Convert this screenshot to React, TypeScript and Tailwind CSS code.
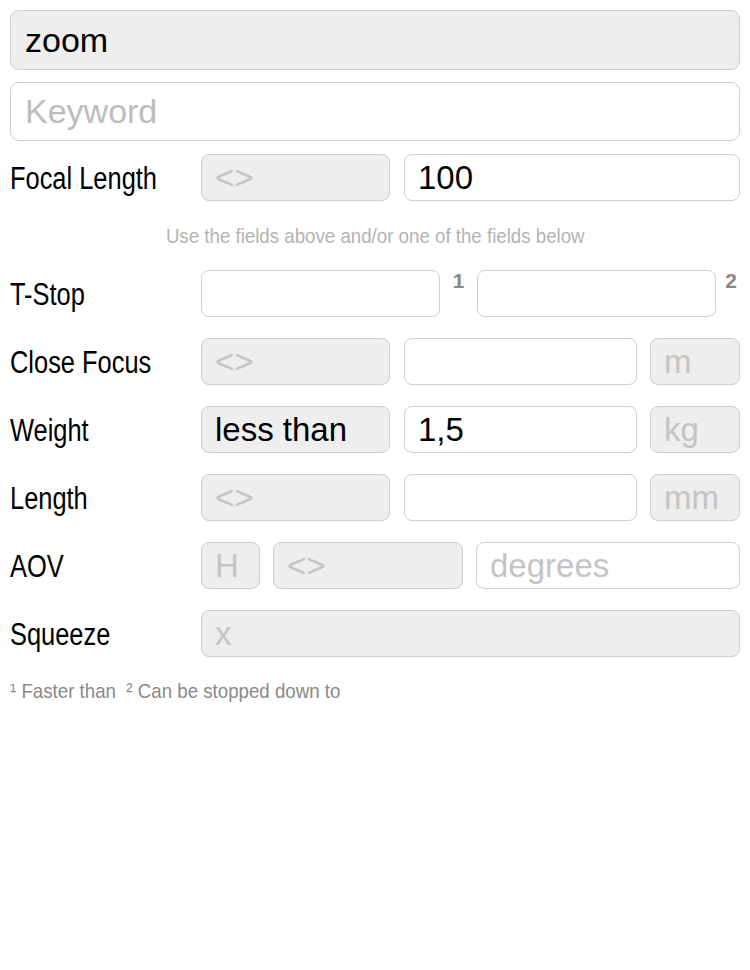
import React from 'react';

// condensed look: Liberation Sans squeezed horizontally (no condensed face installed)
const narrow = "font-['Liberation_Sans',Arial,sans-serif] inline-block scale-x-[0.82] whitespace-nowrap";
const narrowSmall = "font-['Liberation_Sans',Arial,sans-serif] inline-block scale-x-[0.89] whitespace-nowrap";
const field = "font-['Liberation_Sans',Arial,sans-serif]";

type BoxProps = {
  text?: string;
  muted?: boolean;
  gray?: boolean;
  className?: string;
};

const Box: React.FC<BoxProps> = ({ text = '', muted, gray, className = '' }) => (
  <div
    className={`h-[47px] rounded-[8px] border border-[#cfcfcf] flex items-center pl-[13px] text-[33px] leading-none whitespace-nowrap overflow-hidden ${field} ${
      gray ? 'bg-[#eeeeee]' : 'bg-white'
    } ${muted ? 'text-[#c4c4c4]' : 'text-black'} ${className}`}
  >
    {text}
  </div>
);

const Row: React.FC<{ title: string; children: React.ReactNode }> = ({ title, children }) => (
  <div className="h-[47px] flex items-center">
    <div className="w-[191px] shrink-0 text-[31px] text-black leading-none">
      <span className={`${narrow} origin-left`}>{title}</span>
    </div>
    <div className="flex-1 flex items-center">{children}</div>
  </div>
);

export default function App() {
  return (
    <div className="min-h-screen bg-white px-[10px] pt-[10px]">
      <div
        className={`h-[60px] rounded-[9px] border border-[#cfcfcf] bg-[#eeeeee] flex items-center pl-[14px] text-[34px] text-black ${field}`}
      >
        zoom
      </div>
      <div
        className={`mt-[12px] h-[59px] rounded-[9px] border border-[#cfcfcf] bg-white flex items-center pl-[14px] text-[34px] text-[#bdbdbd] ${field}`}
      >
        Keyword
      </div>

      <div className="mt-[13px]">
        <Row title="Focal Length">
          <Box gray muted text="<>" className="w-[189px]" />
          <Box text="100" className="ml-[14px] flex-1" />
        </Row>

        <div className="h-[69px] flex items-center justify-center text-[21px] text-[#b3b3b3] leading-none">
          <span className={`${narrowSmall} origin-center`}>Use the fields above and/or one of the fields below</span>
        </div>

        <div className="flex flex-col gap-[21px]">
          <Row title="T-Stop">
            <Box className="w-[239px]" />
            <div className={`w-[37px] self-start text-center text-[21px] font-bold text-[#888888] leading-none ${field}`}>1</div>
            <Box className="w-[239px]" />
            <div className={`flex-1 self-start text-right pr-[3px] text-[21px] font-bold text-[#888888] leading-none ${field}`}>2</div>
          </Row>
          <Row title="Close Focus">
            <Box gray muted text="<>" className="w-[189px]" />
            <Box className="ml-[14px] w-[233px]" />
            <Box gray muted text="m" className="ml-[13px] flex-1" />
          </Row>
          <Row title="Weight">
            <Box gray text="less than" className="w-[189px]" />
            <Box text="1,5" className="ml-[14px] w-[233px]" />
            <Box gray muted text="kg" className="ml-[13px] flex-1" />
          </Row>
          <Row title="Length">
            <Box gray muted text="<>" className="w-[189px]" />
            <Box className="ml-[14px] w-[233px]" />
            <Box gray muted text="mm" className="ml-[13px] flex-1" />
          </Row>
          <Row title="AOV">
            <Box gray muted text="H" className="w-[59px]" />
            <Box gray muted text="<>" className="ml-[13px] w-[190px]" />
            <Box muted text="degrees" className="ml-[13px] flex-1" />
          </Row>
          <Row title="Squeeze">
            <Box gray muted text="x" className="flex-1" />
          </Row>
        </div>

        <div className="mt-[23px] text-[21px] text-[#8a8a8a] leading-none">
          <span className={`${narrowSmall} origin-left`}>¹ Faster than&nbsp; ² Can be stopped down to</span>
        </div>
      </div>
    </div>
  );
}
